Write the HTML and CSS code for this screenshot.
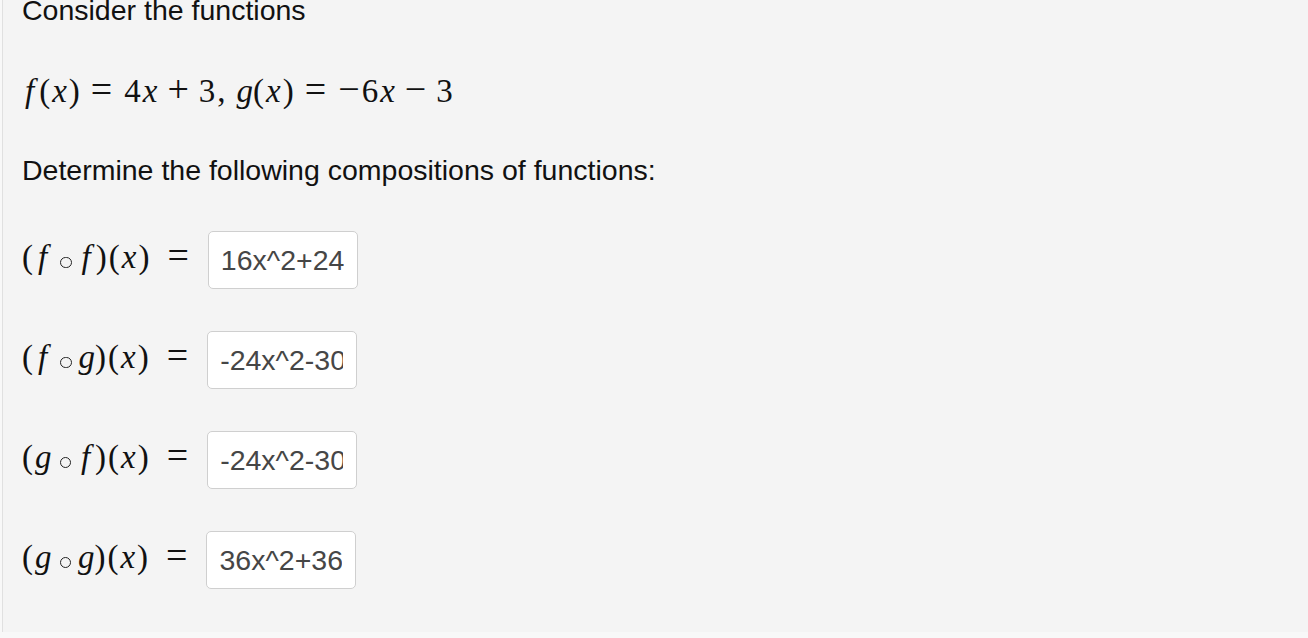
FILE: index.html
```html
<!DOCTYPE html>
<html>
<head>
<meta charset="utf-8">
<link rel="stylesheet" href="styles.css">
</head>
<body>
<div class="page">
  <div class="panel">
    <p class="text first">Consider the functions</p>
    <p class="math line"><i class="f">f</i>(<i>x</i>)<span class="op eq">=</span>4<i>x</i><span class="op bin">+</span>3,<span class="sp"></span><i class="g">g</i>(<i>x</i>)<span class="op eq">=</span><span class="op un">−</span>6<i>x</i><span class="op bin">−</span>3</p>
    <p class="text det">Determine the following compositions of functions:</p>
    <div class="rows">
      <div class="row">
        <span class="math label">(<i class="f">f</i><span class="comp"></span><i class="f">f</i>)(<i>x</i>)<span class="op eql">=</span></span>
        <input class="answer" type="text" value="16x^2+24">
      </div>
      <div class="row">
        <span class="math label">(<i class="f">f</i><span class="comp"></span><i class="g">g</i>)(<i>x</i>)<span class="op eql">=</span></span>
        <input class="answer" type="text" value="-24x^2-30">
      </div>
      <div class="row">
        <span class="math label">(<i class="g">g</i><span class="comp"></span><i class="f">f</i>)(<i>x</i>)<span class="op eql">=</span></span>
        <input class="answer" type="text" value="-24x^2-30">
      </div>
      <div class="row">
        <span class="math label">(<i class="g">g</i><span class="comp"></span><i class="g">g</i>)(<i>x</i>)<span class="op eql">=</span></span>
        <input class="answer" type="text" value="36x^2+36">
      </div>
    </div>
  </div>
</div>
</body>
</html>
```
FILE: styles.css
```css
html, body {
  margin: 0;
  padding: 0;
  background: #f4f4f4;
}
.page {
  height: 638px;
  overflow: hidden;
  padding-left: 2px;
  background: #f8f8f8;
}
.panel {
  height: 100%;
  border-left: 1px solid #e0e0e0;
  background: #f4f4f4;
  padding-left: 19px;
  box-sizing: border-box;
}
p { margin: 0; }
.text {
  font-family: "Liberation Sans", Arial, sans-serif;
  font-size: 28.5px;
  line-height: 33px;
  color: #111;
}
.first {
  margin-top: -6px;
}
.math {
  font-family: "Liberation Serif", "Times New Roman", serif;
  font-size: 33px;
  letter-spacing: 2px;
  color: #111;
}
.math i { font-style: italic; }
.math .f { padding: 0 3px 0 3px; }
.math .g { margin-right: -2px; }
.op {
  font-size: 38px;
  line-height: 0;
  letter-spacing: 0;
}
.eq { margin: 0 12px 0 9px; }
.eql { margin: 0 0 0 16px; }
.bin { margin: 0 10px 0 8px; }
.un { margin: 0 2px 0 0; }
.sp { display: inline-block; width: 9px; }
.comp {
  display: inline-block;
  width: 9.4px;
  height: 9.4px;
  border: 1.3px solid #222;
  border-radius: 50%;
  margin: 0 7px 0 8px;
  vertical-align: baseline;
}
.line {
  margin-top: 44px;
  line-height: 40px;
}
.det {
  margin-top: 43px;
}
.rows {
  margin-top: 44px;
  display: flex;
  flex-direction: column;
  gap: 42px;
}
.row {
  display: flex;
  align-items: center;
  gap: 19px;
  height: 58px;
}
.label {
  white-space: nowrap;
  line-height: 40px;
  padding-bottom: 6px;
}
.answer {
  width: 150px;
  height: 58px;
  box-sizing: border-box;
  border: 1.5px solid #cfcfcf;
  border-radius: 5px;
  background: #fff;
  padding: 0 13px 0 12px;
  font-family: "Liberation Sans", Arial, sans-serif;
  font-size: 28.5px;
  color: #464646;
  outline: none;
}
```
